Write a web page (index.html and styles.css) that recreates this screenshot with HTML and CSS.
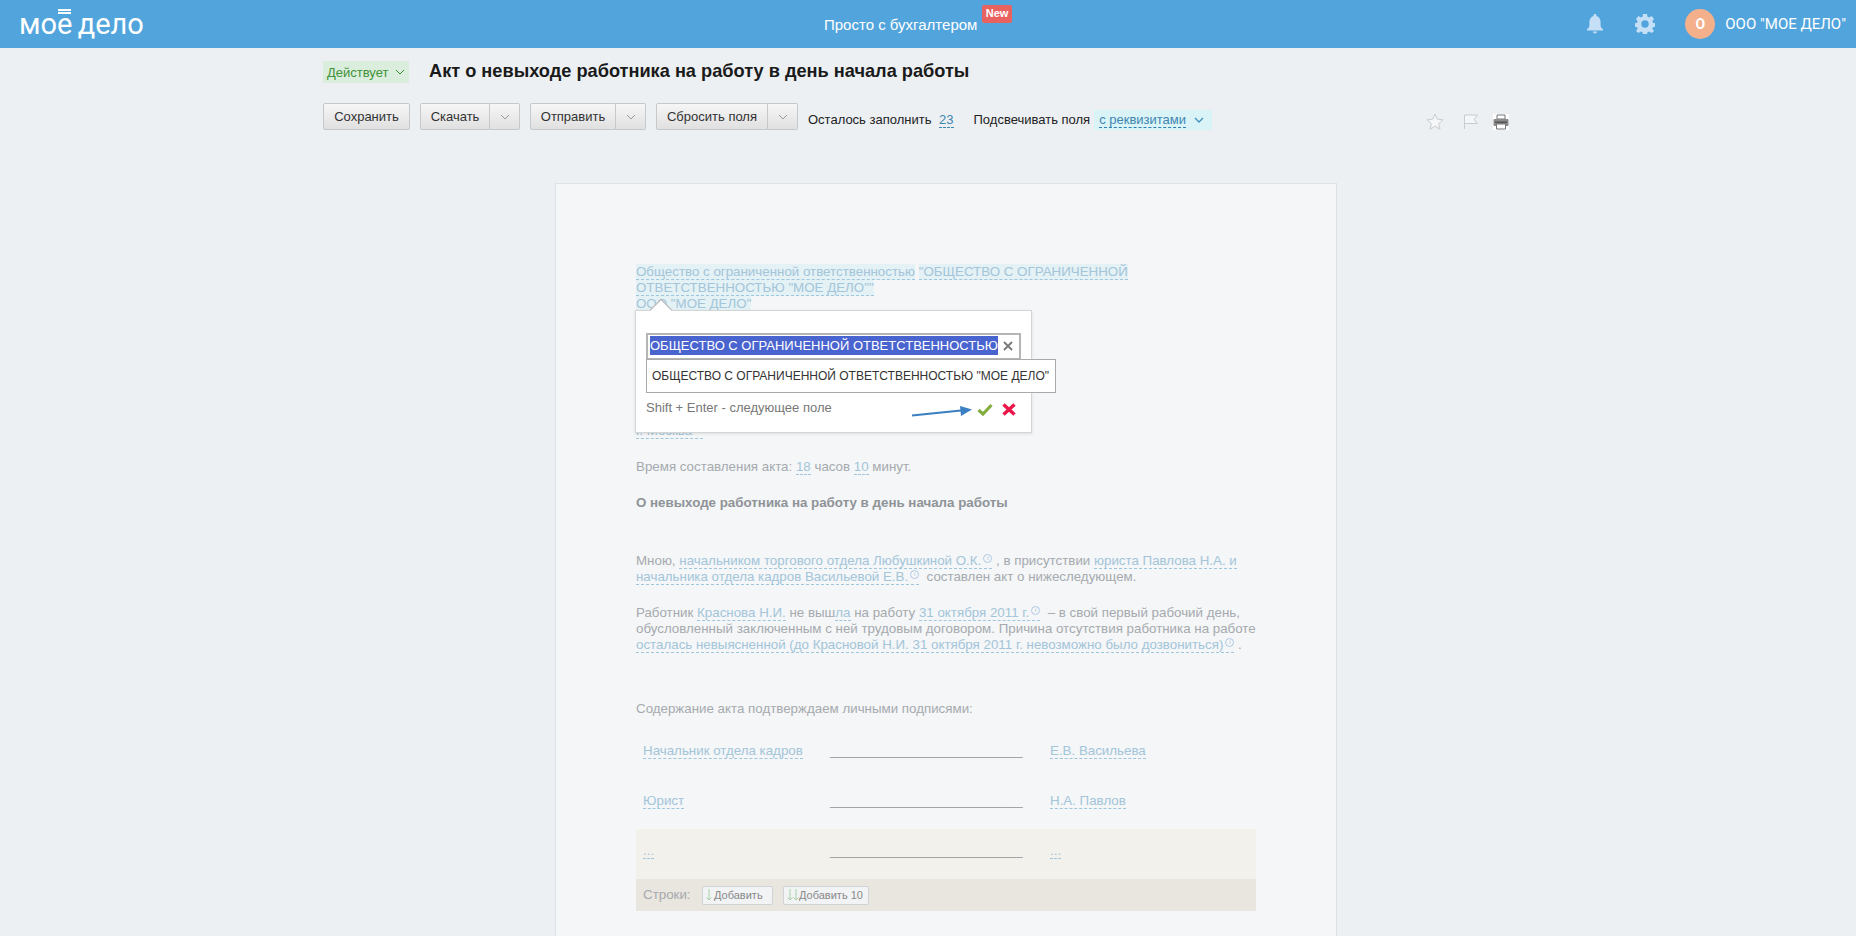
FILE: index.html
```html
<!DOCTYPE html>
<html lang="ru">
<head>
    <meta charset="UTF-8">
    <title>Акт о невыходе работника на работу</title>
    <link rel="stylesheet" href="styles.css">
</head>
<body>
    <header class="topbar">
        <div class="logo">мо<span class="logo-e">е</span> дело</div>
        <div class="topbar-link">Просто с бухгалтером<span class="new-badge">New</span></div>
        <div class="topbar-right">
            <svg class="bell" width="16" height="20" viewBox="0 0 16 20"><path fill="#c5e0f6" d="M8 0c.9 0 1.4.6 1.4 1.4v.5C12 2.600 13.600 5 13.600 8v3.500c0 1.500.8 2.400 2.400 3.700v1.300H0v-1.300c1.600-1.300 2.400-2.200 2.400-3.700V8C2.400 5 4 2.600 6.600 1.900v-.5C6.600.6 7.100 0 8 0zM6 17.500h4c0 1.300-.9 2-2 2s-2-.7-2-2z"/></svg>
            <svg class="gear" width="20" height="20" viewBox="0 0 20 20"><path fill="#c5e0f6" fill-rule="evenodd" d="M8 0h4l.5 2.800 1.700.7L16.500 2 19 5l-1.700 2.200.6 1.600 2.100.4v3.600l-2.100.4-.6 1.600L19 17l-2.500 2-2.300-1.500-1.700.7L12 20H8l-.5-1.800-1.700-.7L3.500 19 1 17l1.700-2.200-.6-1.600-2.100-.4V9.200l2.100-.4.6-1.600L1 5l2.500-3 2.300 1.500 1.700-.7zM10 6.300a3.700 3.700 0 1 0 0 7.400 3.700 3.700 0 0 0 0-7.400z"/></svg>
            <div class="avatar">О</div>
            <div class="company">ООО "МОЕ ДЕЛО"</div>
        </div>
    </header>

    <div class="container">
        <div class="title-row">
            <div class="status">Действует <svg class="chev" width="10" height="6" viewBox="0 0 10 6"><path d="M1 1l4 4 4-4" fill="none" stroke="#3f9238"/></svg></div>
            <h1>Акт о невыходе работника на работу в день начала работы</h1>
        </div>

        <div class="toolbar">
            <button class="btn btn-save">Сохранить</button>
            <div class="btn-group">
                <button class="btn btn-main btn-w69">Скачать</button>
                <button class="btn btn-arrow"><svg width="10" height="6" viewBox="0 0 10 6"><path d="M1 1l4 4 4-4" fill="none" stroke="#999"/></svg></button>
            </div>
            <div class="btn-group">
                <button class="btn btn-main btn-w85">Отправить</button>
                <button class="btn btn-arrow"><svg width="10" height="6" viewBox="0 0 10 6"><path d="M1 1l4 4 4-4" fill="none" stroke="#999"/></svg></button>
            </div>
            <div class="btn-group">
                <button class="btn btn-main btn-w111">Сбросить поля</button>
                <button class="btn btn-arrow"><svg width="10" height="6" viewBox="0 0 10 6"><path d="M1 1l4 4 4-4" fill="none" stroke="#999"/></svg></button>
            </div>
            <div class="remain">Осталось заполнить <span class="remain-num">23</span></div>
            <div class="highlight-label">Подсвечивать поля</div>
            <div class="highlight-select"><span>с реквизитами</span> <svg width="10" height="6" viewBox="0 0 10 6"><path d="M1 1l4 4 4-4" fill="none" stroke="#3f8fbf" stroke-width="1.300"/></svg></div>
            <div class="doc-icons">
                <svg width="18" height="17" viewBox="0 0 18 17"><path d="M9 1l2.300 5.200 5.700.6-4.300 3.800 1.300 5.600L9 13.300l-5 2.900 1.300-5.600L1 6.800l5.700-.6z" fill="#f4f6f8" stroke="#c8ccd0"/></svg>
                <svg width="15" height="15" viewBox="0 0 15 15"><path d="M1.500 15V1h13l-3.500 4.500 3.500 4H1.500" fill="#f4f6f8" stroke="#c8ccd0"/></svg>
                <svg width="16" height="16" viewBox="0 0 16 16"><rect width="16" height="16" fill="#fff"/><path d="M4 1h8v4H4z" fill="#fff" stroke="#777"/><rect x="0.500" y="5" width="15" height="7" rx="1" fill="#8a8a8a"/><rect x="2" y="7.500" width="12" height="1.500" fill="#555"/><path d="M3.500 10h9v5h-9z" fill="#fff" stroke="#777"/></svg>
            </div>
        </div>

        <main class="paper">
            <p class="doc-head">
                <span class="fld fld-on">Общество с ограниченной ответственностью</span> <span class="fld fld-on">"ОБЩЕСТВО С ОГРАНИЧЕННОЙ</span> <span class="fld fld-on">ОТВЕТСТВЕННОСТЬЮ "МОЕ ДЕЛО""</span><br>
                <span class="fld-on">ООО "МОЕ ДЕЛО"</span>
            </p>

            <div class="popup">
                <div class="popup-caret"></div>
                <div class="popup-input">
                    <span class="selected">ОБЩЕСТВО С ОГРАНИЧЕННОЙ ОТВЕТСТВЕННОСТЬЮ</span>
                    <svg width="10" height="10" viewBox="0 0 10 10"><path d="M1 1l8 8M9 1l-8 8" stroke="#777" stroke-width="1.800"/></svg>
                </div>
                <div class="popup-suggest">ОБЩЕСТВО С ОГРАНИЧЕННОЙ ОТВЕТСТВЕННОСТЬЮ "МОЕ ДЕЛО"</div>
                <div class="popup-foot">
                    <span class="popup-hint">Shift + Enter - следующее поле</span>
                    <svg class="popup-arrow" width="62" height="12" viewBox="0 0 62 12"><path d="M1 10.500L50 5.500" stroke="#3a7fc1" stroke-width="2"/><path d="M49 1l12 3.500-11 6.500z" fill="#3a7fc1"/></svg>
                    <svg class="popup-ok" width="16" height="13" viewBox="0 0 16 13"><path d="M1.500 7l4.500 4L14.500 2" fill="none" stroke="#84ad3f" stroke-width="3.200"/></svg>
                    <svg class="popup-no" width="14" height="13" viewBox="0 0 14 13"><path d="M1.500 1.500l11 10M12.500 1.500l-11 10" stroke="#ec1648" stroke-width="3.400"/></svg>
                </div>
            </div>

            <p class="doc-city"><span class="fld">г. Москва<i class="info">i</i></span></p>
            <p class="doc-p">Время составления акта: <span class="fld">18</span> часов <span class="fld">10</span> минут.</p>
            <p class="doc-p doc-bold">О невыходе работника на работу в день начала работы</p>
            <p class="doc-p doc-gap">Мною, <span class="fld">начальником торгового отдела Любушкиной О.К.<i class="info">i</i></span> , в присутствии <span class="fld">юриста Павлова Н.А. и</span> <span class="fld">начальника отдела кадров Васильевой Е.В.<i class="info">i</i></span> &nbsp;составлен акт о нижеследующем.</p>
            <p class="doc-p">Работник <span class="fld">Краснова Н.И.</span> не выш<span class="fld">ла</span> на работу <span class="fld">31 октября 2011 г.<i class="info">i</i></span> &nbsp;– в свой первый рабочий день,<br>обусловленный заключенным с ней трудовым договором. Причина отсутствия работника на работе<br><span class="fld">осталась невыясненной (до Красновой Н.И. 31 октября 2011 г. невозможно было дозвониться)<i class="info">i</i></span> .</p>
            <p class="doc-p doc-sign">Содержание акта подтверждаем личными подписями:</p>

            <div class="sign-table">
                <div class="sign-row">
                    <div><span class="fld">Начальник отдела кадров</span></div>
                    <div class="sign-line">__________________________</div>
                    <div><span class="fld">Е.В. Васильева</span></div>
                </div>
                <div class="sign-row">
                    <div><span class="fld">Юрист</span></div>
                    <div class="sign-line">__________________________</div>
                    <div><span class="fld">Н.А. Павлов</span></div>
                </div>
                <div class="sign-row sign-new">
                    <div><span class="fld">...</span></div>
                    <div class="sign-line">__________________________</div>
                    <div><span class="fld">...</span></div>
                </div>
                <div class="rows-bar">
                    <span class="rows-label">Строки:</span>
                    <button class="add-btn add-one"><svg width="6" height="12" viewBox="0 0 6 12"><path d="M3 0v11M.5 8.500L3 11l2.500-2.500" fill="none" stroke="#a9cfa8"/></svg>Добавить</button>
                    <button class="add-btn add-ten"><svg width="6" height="12" viewBox="0 0 6 12"><path d="M3 0v11M.5 8.500L3 11l2.500-2.500" fill="none" stroke="#a9cfa8"/></svg><svg width="6" height="12" viewBox="0 0 6 12"><path d="M3 0v11M.5 8.500L3 11l2.500-2.500" fill="none" stroke="#a9cfa8"/></svg>Добавить 10</button>
                </div>
            </div>
        </main>
    </div>
</body>
</html>
```

FILE: styles.css
```css
:root {
    --page-bg: #ecf0f3;
    --paper-bg: #f4f6f8;
    --bar-blue: #52a5dc;
    --doc-text: #a6aaae;
    --doc-field: #a3c5d9;
}

html, body {
    height: 100%;
    overflow: hidden;
}

body {
    margin: 0;
    background-color: var(--page-bg);
    font-family: "Liberation Sans", Arial, sans-serif;
    font-size: 13px;
    color: #222;
}

.topbar {
    display: flex;
    align-items: center;
    height: 48px;
    padding: 0 10px 0 19px;
    background-color: var(--bar-blue);
    color: #fff;
}

.logo {
    width: 143px;
    font-family: Roboto, sans-serif;
    font-size: 29px;
    line-height: 48px;
    word-spacing: -2px;
    white-space: nowrap;
}

.logo-e {
    position: relative;
}

.logo-e::before {
    content: "";
    position: absolute;
    left: 1px;
    right: 1px;
    top: 2px;
    height: 1px;
    border-top: 2px solid #fff;
    border-bottom: 2px solid #fff;
}

.topbar-link {
    position: relative;
    margin-left: 662px;
    font-size: 15px;
}

.new-badge {
    position: absolute;
    left: 158px;
    top: -11px;
    width: 30px;
    height: 18px;
    line-height: 16px;
    border-radius: 2px;
    background-color: #e8625f;
    font-size: 11px;
    font-weight: bold;
    text-align: center;
}

.topbar-right {
    display: flex;
    align-items: center;
    margin-left: auto;
}

.gear {
    margin-left: 32px;
}

.avatar {
    width: 30px;
    height: 30px;
    margin-left: 30px;
    border-radius: 50%;
    background-color: #f4af8b;
    font-family: Roboto, sans-serif;
    font-size: 14px;
    font-weight: bold;
    line-height: 30px;
    text-align: center;
}

.company {
    margin-left: 10px;
    font-family: Roboto, sans-serif;
    font-size: 15px;
    white-space: nowrap;
}

.container {
    width: 1210px;
    margin: 0 auto;
}

.title-row {
    display: flex;
    align-items: center;
    height: 22px;
    margin-top: 13px;
}

.status {
    display: flex;
    align-items: center;
    justify-content: space-between;
    box-sizing: border-box;
    width: 86px;
    height: 22px;
    padding: 0 4px;
    background-color: #dbeddc;
    color: #3f9238;
    font-size: 13px;
}

h1 {
    margin: 0 0 1px 20px;
    font-size: 18.200px;
    line-height: 21px;
    font-weight: bold;
    color: #1a1a1a;
}

.toolbar {
    display: flex;
    align-items: flex-start;
    height: 27px;
    margin-top: 20px;
    padding-right: 24px;
}

.btn {
    box-sizing: border-box;
    height: 27px;
    margin: 0;
    padding: 0;
    border: 1px solid #c6c8ca;
    border-radius: 2px;
    background: linear-gradient(#f6f6f6, #e0e0e0);
    font-family: "Liberation Sans", Arial, sans-serif;
    font-size: 13px;
    color: #333;
}

.btn-save {
    width: 87px;
    margin-right: 10px;
}

.btn-group {
    display: flex;
    margin-right: 10px;
}

.btn-main {
    border-radius: 2px 0 0 2px;
}

.btn-w69 { width: 70px; }
.btn-w85 { width: 86px; }
.btn-w111 { width: 112px; }

.btn-arrow {
    width: 30px;
    border-left: none;
    border-radius: 0 2px 2px 0;
}

.btn-arrow svg {
    display: block;
    margin: 1px auto 0;
}

.remain {
    margin-top: 7px;
    font-size: 13px;
    line-height: 20px;
    white-space: nowrap;
}

.remain-num {
    margin-left: 4px;
    color: #3f86b0;
    border-bottom: 1px dashed #3f86b0;
}

.highlight-label {
    margin-left: 20px;
    margin-top: 7px;
    font-size: 13px;
    line-height: 20px;
    white-space: nowrap;
}

.highlight-select {
    display: flex;
    align-items: center;
    gap: 8px;
    box-sizing: border-box;
    width: 118px;
    height: 20px;
    margin-left: 4px;
    margin-top: 7px;
    padding-left: 5px;
    background-color: #d9f3f7;
    color: #3f86b0;
    font-size: 13px;
    white-space: nowrap;
}

.highlight-select span {
    border-bottom: 1px dashed #2f7fb0;
}

.doc-icons {
    display: flex;
    align-items: center;
    gap: 19px;
    margin-left: auto;
    margin-top: 10px;
}

.doc-icons svg {
    display: block;
}

.doc-icons svg:last-child {
    margin-left: -4px;
}

.paper {
    position: relative;
    box-sizing: border-box;
    height: 900px;
    width: 782px;
    margin: 53px 0 0 232px;
    padding: 80px 0 0 80px;
    border: 1px solid #dde1e5;
    border-bottom: none;
    background-color: var(--paper-bg);
    color: var(--doc-text);
    font-size: 13.330px;
    line-height: 16px;
}

.paper p {
    margin: 0;
}

.fld {
    color: var(--doc-field);
    border-bottom: 1px dashed #9fc6dc;
}

.fld-on {
    color: var(--doc-field);
    background-color: #e4f1f5;
}

.doc-head {
    width: 500px;
}

.doc-city {
    margin-top: 111px !important;
}

.doc-p {
    width: 620px;
    margin-top: 20px !important;
}

.doc-bold {
    font-weight: bold;
    color: #8f9397;
}

.doc-gap {
    margin-top: 42px !important;
}

.doc-sign {
    margin-top: 48px !important;
}

.info {
    display: inline-block;
    box-sizing: border-box;
    width: 9px;
    height: 9px;
    margin: 0 0 0 2px;
    border: 1px solid #b0c9e4;
    border-radius: 50%;
    color: #a5bfdc;
    font-size: 6px;
    font-style: normal;
    line-height: 7px;
    text-align: center;
    vertical-align: 5px;
}

.popup {
    position: absolute;
    left: 79px;
    top: 126px;
    box-sizing: border-box;
    width: 397px;
    height: 123px;
    padding: 22px 10px 0;
    border: 1px solid #d3d5d7;
    background-color: #fff;
    box-shadow: 0 1px 3px rgba(0,0,0,0.1);
    color: #777;
}

.popup-caret {
    position: absolute;
    left: 17px;
    top: -9px;
    width: 15px;
    height: 15px;
    border-left: 1px solid #aeb0b2;
    border-top: 1px solid #aeb0b2;
    background-color: #fff;
    transform: rotate(45deg);
}

.popup-input {
    display: flex;
    align-items: center;
    justify-content: space-between;
    box-sizing: border-box;
    width: 375px;
    height: 26px;
    padding: 0 6px 2px 2px;
    border: 2px solid #b5b5b5;
    border-bottom-width: 1px;
}

.selected {
    padding: 2px 0;
    background-color: #4a64cf;
    color: #fff;
    font-size: 13px;
    line-height: 15px;
    white-space: nowrap;
}

.popup-suggest {
    position: relative;
    box-sizing: border-box;
    width: 410px;
    height: 34px;
    padding-left: 5px;
    border: 1px solid #aaa;
    background-color: #fff;
    color: #333;
    font-size: 12px;
    line-height: 32px;
    white-space: nowrap;
}

.popup-foot {
    display: flex;
    align-items: center;
    height: 30px;
    font-size: 13px;
}

.popup-hint {
    margin-right: auto;
}

.popup-arrow {
    margin: 5px 5px 0 0;
}

.popup-ok {
    margin: 2px 9px 0 -1px;
}

.popup-no {
    margin: 2px 5px 0 0;
}

.sign-table {
    width: 620px;
    margin-top: 12px;
}

.sign-row {
    display: grid;
    grid-template-columns: 159px 192px 1fr;
    column-gap: 28px;
    height: 50px;
    box-sizing: border-box;
    padding: 14px 0 0 7px;
    white-space: nowrap;
}

.sign-line {
    color: #9a9a9a;
}

.sign-new {
    background-color: #f3f1ec;
}

.rows-bar {
    display: flex;
    align-items: center;
    box-sizing: border-box;
    height: 32px;
    padding-left: 7px;
    background-color: #e9e5df;
}

.rows-label {
    width: 59px;
}

.add-btn {
    display: flex;
    align-items: center;
    box-sizing: border-box;
    height: 19px;
    margin: 0 10px 0 0;
    padding: 0 0 0 3px;
    border: 1px solid #d0d3d6;
    border-radius: 2px;
    background-color: #f1f3f5;
    color: #888;
    font-family: "Liberation Sans", Arial, sans-serif;
    font-size: 11px;
    white-space: nowrap;
}

.add-one { width: 71px; }
.add-ten { width: 86px; }

.add-one svg {
    margin-right: 2px;
}

.chev {
    display: block;
}
```
